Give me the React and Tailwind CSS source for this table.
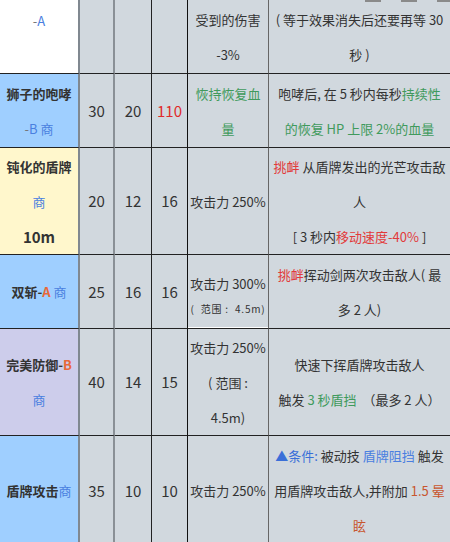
const font = { fontFamily: '"Noto Sans CJK SC", "Noto Sans", sans-serif' };

const blue = 'text-[#4a7fe0]';
const green = 'text-[#3f9a5c]';
const red = 'text-[#e23a3a]';
const orange = 'text-[#e8683a]';

const cell = 'flex flex-col justify-center items-center text-center border-b border-b-[#222] whitespace-nowrap';
const base = `${cell} leading-[35px]`;
const nameCell = `${base} border-r-2 border-r-[#808890] font-bold`;
const numCell = `${cell} text-[15px] leading-[22px]`;
const effCell = `${base} border-r border-r-[#666]`;
const descCell = base;

function Nums({ a, b, c, cRed }) {
    return (
        <>
            <div className={`${numCell} border-r-2 border-r-[#8a9096]`}>{a}</div>
            <div className={`${numCell} border-r border-r-[#222]`}>{b}</div>
            <div className={`${numCell} border-r border-r-[#111] ${cRed ? 'text-[#e02a2a]' : ''}`}>{c}</div>
        </>
    );
}

export default function App() {
    return (
        <div className="relative w-[450px] h-[542px] overflow-hidden bg-[#d1d8de] text-[#333] text-[13px]" style={font}>
            <div className="absolute top-0 right-0 flex gap-[20px] z-10">
                <div className="w-[16px] h-[2px] bg-[#8a8a8a]" />
                <div className="w-[16px] h-[2px] bg-[#8a8a8a]" />
                <div className="w-[13px] h-[2px] bg-[#8a8a8a]" />
            </div>
            <div className="grid grid-cols-[80px_35px_37px_36px_81px_181px] grid-rows-[74px_74px_107px_74px_107px_110px]">
                {/* row 0 */}
                <div className={`${nameCell} bg-white justify-start pt-[3px] font-normal`}>
                    <div><span className="text-[#777]">-</span><span className={blue}>A</span></div>
                </div>
                <Nums a="" b="" c="" />
                <div className={effCell}>
                    <div>受到的伤害</div>
                    <div>-3%</div>
                </div>
                <div className={descCell}>
                    <div>( 等于效果消失后还要再等 30</div>
                    <div>秒 )</div>
                </div>

                {/* row 1 */}
                <div className={`${nameCell} bg-[#9fcfff]`}>
                    <div>狮子的咆哮</div>
                    <div className="font-normal"><span className="text-[#777]">-</span><span className={blue}>B 商</span></div>
                </div>
                <Nums a="30" b="20" c="110" cRed />
                <div className={`${effCell} ${green}`}>
                    <div>恢持恢复血</div>
                    <div>量</div>
                </div>
                <div className={descCell}>
                    <div>咆哮后, 在 5 秒内每秒<span className={green}>持续性</span></div>
                    <div className={green}>的恢复 HP 上限 2%的血量</div>
                </div>

                {/* row 2 */}
                <div className={`${nameCell} bg-[#fff7cc]`}>
                    <div>钝化的盾牌</div>
                    <div className={`${blue} font-normal`}>商</div>
                    <div className="text-[15px]">10m</div>
                </div>
                <Nums a="20" b="12" c="16" />
                <div className={effCell}>攻击力 250%</div>
                <div className={descCell}>
                    <div><span className={red}>挑衅</span> 从盾牌发出的光芒攻击敌</div>
                    <div>人</div>
                    <div>[ 3 秒内<span className={red}>移动速度-40%</span> ]</div>
                </div>

                {/* row 3 */}
                <div className={`${nameCell} bg-[#9fcfff]`}>
                    <div>双斩-<span className={orange}>A</span> <span className={`${blue} font-normal`}>商</span></div>
                </div>
                <Nums a="25" b="16" c="16" />
                <div className={`${cell} border-r border-r-[#666] justify-start pt-[17px] shadow-[inset_0_-1px_0_#fff]`}>
                    <div className="leading-[24px]">攻击力 300%</div>
                    <div className="leading-[26px] text-[10px] tracking-[0.8px]">(&nbsp;&nbsp;范围&nbsp;:&nbsp;&nbsp;4.5m)</div>
                </div>
                <div className={descCell}>
                    <div><span className={red}>挑衅</span>挥动剑两次攻击敌人( 最</div>
                    <div>多 2 人)</div>
                </div>

                {/* row 4 */}
                <div className={`${nameCell} bg-[#cdcdeb]`}>
                    <div>完美防御-<span className={orange}>B</span></div>
                    <div className={`${blue} font-normal`}>商</div>
                </div>
                <Nums a="40" b="14" c="15" />
                <div className={effCell}>
                    <div>攻击力 250%</div>
                    <div>( 范围 :</div>
                    <div>4.5m)</div>
                </div>
                <div className={descCell}>
                    <div>快速下挥盾牌攻击敌人</div>
                    <div>触发 <span className={green}>3 秒盾挡</span>&nbsp;&nbsp;（最多 2 人）</div>
                </div>

                {/* row 5 */}
                <div className={`${nameCell} bg-[#9fcfff]`}>
                    <div>盾牌攻击<span className={`${blue} font-normal`}>商</span></div>
                </div>
                <Nums a="35" b="10" c="10" />
                <div className={effCell}>攻击力 250%</div>
                <div className={descCell}>
                    <div><span className="text-[#3a6fd8]">▲条件:</span> 被动技 <span className={blue}>盾牌阻挡</span> 触发</div>
                    <div>用盾牌攻击敌人,并附加 <span className="text-[#c8562e]">1.5 晕</span></div>
                    <div className="text-[#c8562e]">眩</div>
                </div>
            </div>
        </div>
    );
}
